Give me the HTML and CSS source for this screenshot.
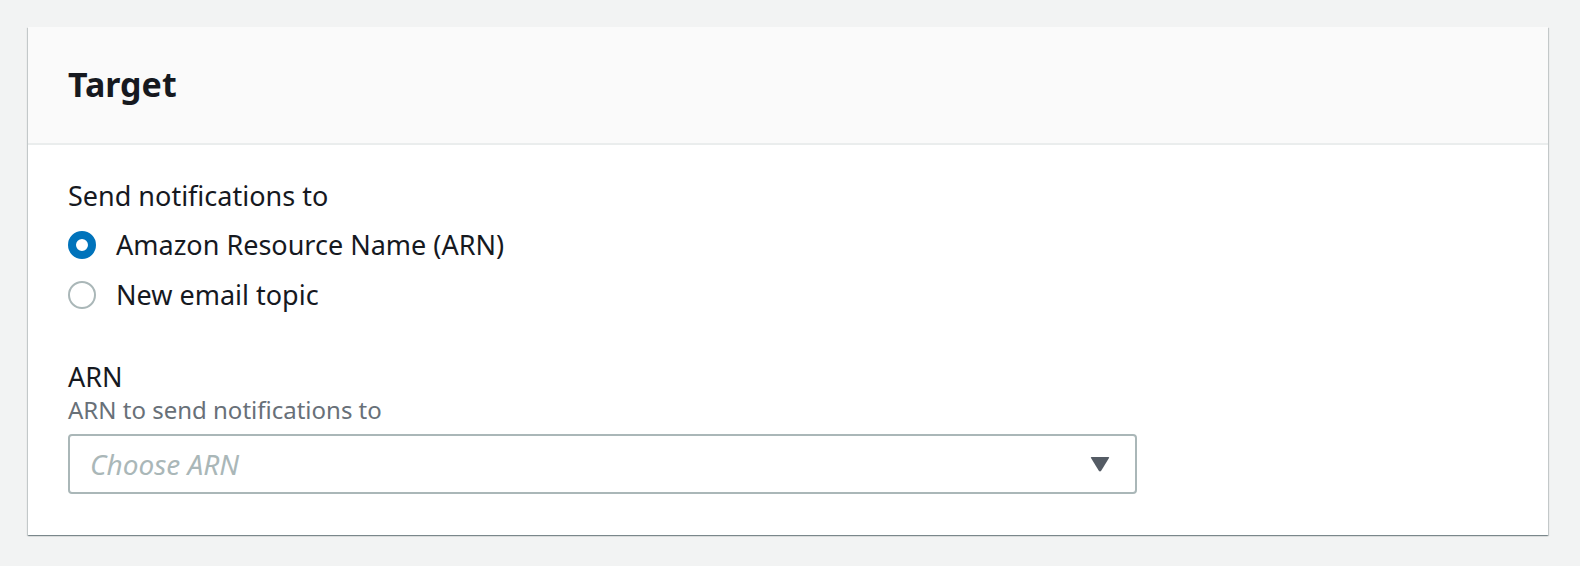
FILE: index.html
```html
<!DOCTYPE html>
<html lang="en">
<head>
<meta charset="utf-8">
<title>Target</title>
<link rel="stylesheet" href="styles.css">
</head>
<body>
<main class="page">
  <section class="card">
    <header class="card-header">
      <h2 class="card-title">Target</h2>
    </header>
    <div class="card-body">
      <fieldset class="field">
        <legend class="field-label">Send notifications to</legend>
        <div class="radio-list">
          <label class="radio">
            <span class="radio-ctrl checked"></span>
            <span class="radio-text">Amazon Resource Name (ARN)</span>
          </label>
          <label class="radio">
            <span class="radio-ctrl"></span>
            <span class="radio-text">New email topic</span>
          </label>
        </div>
      </fieldset>
      <div class="field arn-field">
        <div class="field-label arn-label">ARN</div>
        <div class="field-desc">ARN to send notifications to</div>
        <div class="select">
          <span class="placeholder">Choose ARN</span>
          <svg class="caret" width="20" height="16" viewBox="0 0 20 16" aria-hidden="true">
            <path d="M1.5 1 H18.5 Q19.6 1 19 2 L11.2 14.8 Q10 16.4 8.8 14.8 L1 2 Q0.4 1 1.5 1 Z" fill="#545b64"/>
          </svg>
        </div>
      </div>
    </div>
  </section>
</main>
</body>
</html>
```

FILE: styles.css
```css
html, body {
  margin: 0;
  padding: 0;
}
body {
  background: #f2f3f3;
  font-family: "Noto Sans", "Open Sans", Arial, sans-serif;
  color: #16191f;
}
.page {
  padding: 27px 32px 31px 28px;
}
.card {
  background: #ffffff;
  box-shadow: 0 1px 1px 0 rgba(0, 28, 36, 0.3), 1px 1px 1px 0 rgba(0, 28, 36, 0.15), -1px 1px 1px 0 rgba(0, 28, 36, 0.15);
}
.card-header {
  background: #fafafa;
  border-bottom: 2px solid #eaeded;
  height: 118px;
  box-sizing: border-box;
  padding: 0 40px 2px;
  display: flex;
  align-items: center;
}
.card-title {
  margin: 0;
  font-size: 34px;
  font-weight: 700;
  line-height: 44px;
  color: #16191f;
}
.card-body {
  padding: 31px 40px 41px;
}
.field {
  border: 0;
  margin: 0;
  padding: 0;
  min-width: 0;
}
.field-label {
  padding: 0;
  font-size: 27px;
  line-height: 40px;
  color: #16191f;
}
.radio-list {
  padding-top: 4px;
}
.radio {
  display: flex;
  align-items: center;
  gap: 20px;
  height: 50px;
}
.radio-ctrl {
  width: 28px;
  height: 28px;
  box-sizing: border-box;
  border-radius: 50%;
  border: 2px solid #aab7b8;
  background: #fff;
  flex: none;
}
.radio-ctrl.checked {
  border: 8px solid #0073bb;
}
.radio-text {
  font-size: 27px;
  line-height: 40px;
}
.arn-field {
  margin-top: 40px;
}
.arn-label {
  line-height: 34px;
}
.field-desc {
  font-size: 24px;
  line-height: 32px;
  color: #687078;
  margin-bottom: 8px;
}
.select {
  width: 1069px;
  height: 60px;
  box-sizing: border-box;
  border: 2px solid #aab7b8;
  border-radius: 4px;
  display: flex;
  align-items: center;
  justify-content: space-between;
  padding: 0 25px 0 20px;
}
.placeholder {
  font-size: 28px;
  font-style: italic;
  color: #aab7b8;
}
.caret {
  display: block;
}
```
